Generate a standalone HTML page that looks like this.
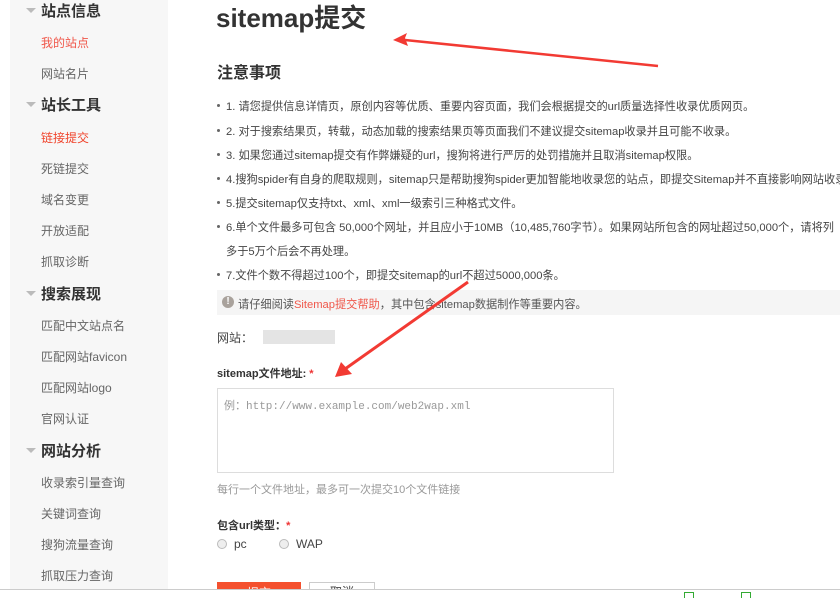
<!DOCTYPE html>
<html><head><meta charset="utf-8"><style>
*{margin:0;padding:0;box-sizing:border-box}
html,body{width:840px;height:598px;overflow:hidden}
body{background:#fff;font-family:"Liberation Sans","Noto Sans CJK SC",sans-serif;color:#333}
#w{position:relative;width:840px;height:598px;overflow:hidden}
.a{position:absolute;white-space:nowrap}
#side{position:absolute;left:10px;top:0;width:158px;height:598px;background:#f7f7f7}
.h{font-size:15px;font-weight:bold;color:#333}
.tri{position:absolute;left:26px;width:0;height:0;border-left:5px solid transparent;border-right:5px solid transparent;border-top:5px solid #bbb}
.i{font-size:12px;color:#666}
.li{font-size:11.2px;color:#444;max-width:614px;overflow:hidden}
.dot{position:absolute;left:217px;width:3px;height:3px;background:#666;border-radius:50%}
</style></head><body><div id="w">
<div id="side"></div>
<div class="tri" style="top:8px"></div><div class="a h" style="left:41px;top:0px">站点信息</div>
<div class="a i" style="left:41px;top:34px;color:#f0574a">我的站点</div>
<div class="a i" style="left:41px;top:65px">网站名片</div>
<div class="tri" style="top:102px"></div><div class="a h" style="left:41px;top:94px">站长工具</div>
<div class="a i" style="left:41px;top:129px;color:#f0442c">链接提交</div>
<div class="a i" style="left:41px;top:160px">死链提交</div>
<div class="a i" style="left:41px;top:191px">域名变更</div>
<div class="a i" style="left:41px;top:222px">开放适配</div>
<div class="a i" style="left:41px;top:253px">抓取诊断</div>
<div class="tri" style="top:291px"></div><div class="a h" style="left:41px;top:283px">搜索展现</div>
<div class="a i" style="left:41px;top:317px">匹配中文站点名</div>
<div class="a i" style="left:41px;top:348px">匹配网站favicon</div>
<div class="a i" style="left:41px;top:379px">匹配网站logo</div>
<div class="a i" style="left:41px;top:410px">官网认证</div>
<div class="tri" style="top:448px"></div><div class="a h" style="left:41px;top:440px">网站分析</div>
<div class="a i" style="left:41px;top:474px">收录索引量查询</div>
<div class="a i" style="left:41px;top:505px">关键词查询</div>
<div class="a i" style="left:41px;top:536px">搜狗流量查询</div>
<div class="a i" style="left:41px;top:567px">抓取压力查询</div>

<div class="a" style="left:216px;top:-2px;font-size:26px;font-weight:bold;color:#333">sitemap提交</div>
<div class="a" style="left:217px;top:59px;font-size:16px;font-weight:bold">注意事项</div>

<div class="dot" style="top:104px"></div><div class="a li" style="left:226px;top:98px">1. 请您提供信息详情页，原创内容等优质、重要内容页面，我们会根据提交的url质量选择性收录优质网页。</div>
<div class="dot" style="top:129px"></div><div class="a li" style="left:226px;top:123px">2. 对于搜索结果页，转载，动态加载的搜索结果页等页面我们不建议提交sitemap收录并且可能不收录。</div>
<div class="dot" style="top:153px"></div><div class="a li" style="left:226px;top:147px">3. 如果您通过sitemap提交有作弊嫌疑的url，搜狗将进行严厉的处罚措施并且取消sitemap权限。</div>
<div class="dot" style="top:177px"></div><div class="a li" style="left:226px;top:171px">4.搜狗spider有自身的爬取规则，sitemap只是帮助搜狗spider更加智能地收录您的站点，即提交Sitemap并不直接影响网站收录</div>
<div class="dot" style="top:201px"></div><div class="a li" style="left:226px;top:195px">5.提交sitemap仅支持txt、xml、xml一级索引三种格式文件。</div>
<div class="dot" style="top:225px"></div><div class="a li" style="left:226px;top:219px">6.单个文件最多可包含 50,000个网址，并且应小于10MB（10,485,760字节）。如果网站所包含的网址超过50,000个，请将列</div>
<div class="a li" style="left:226px;top:243px">多于5万个后会不再处理。</div>
<div class="dot" style="top:273px"></div><div class="a li" style="left:226px;top:267px">7.文件个数不得超过100个，即提交sitemap的url不超过5000,000条。</div>

<div class="a" style="left:217px;top:290px;width:623px;height:25px;background:#f5f5f5"></div>
<div class="a" style="left:222px;top:296px;width:12px;height:12px;border-radius:50%;background:#a9a29c;color:#fff;font-size:10px;font-weight:bold;text-align:center;line-height:12px">!</div>
<div class="a" style="left:238px;top:296px;font-size:11.2px;color:#555">请仔细阅读<span style="color:#f0574a">Sitemap提交帮助</span>，其中包含sitemap数据制作等重要内容。</div>

<div class="a" style="left:217px;top:329px;font-size:12px;color:#444">网站：</div>
<div class="a" style="left:263px;top:330px;width:72px;height:14px;background:#e4e4e4"></div>
<div class="a" style="left:217px;top:365px;font-size:11px;font-weight:bold;color:#333">sitemap文件地址: <span style="color:#e33">*</span></div>
<div class="a" style="left:217px;top:388px;width:397px;height:85px;border:1px solid #ddd"></div>
<div class="a" style="left:224px;top:397px;font-size:11px;color:#999;font-family:'Liberation Mono','Noto Sans CJK SC',monospace">例：http://www.example.com/web2wap.xml</div>
<div class="a" style="left:217px;top:481px;font-size:11px;color:#999">每行一个文件地址，最多可一次提交10个文件链接</div>
<div class="a" style="left:217px;top:517px;font-size:11px;font-weight:bold;color:#333">包含url类型：<span style="color:#e33">*</span></div>
<div class="a" style="left:217px;top:539px;width:10px;height:10px;border-radius:50%;border:1px solid #bbb;background:#eee"></div>
<div class="a" style="left:234px;top:537px;font-size:12px;color:#444">pc</div>
<div class="a" style="left:279px;top:539px;width:10px;height:10px;border-radius:50%;border:1px solid #bbb;background:#eee"></div>
<div class="a" style="left:296px;top:537px;font-size:12px;color:#444">WAP</div>
<div class="a" style="left:217px;top:582px;width:84px;height:16px;background:#f4512f;color:#fff;font-size:12px;text-align:center;padding-top:2px;overflow:hidden">提交</div>
<div class="a" style="left:309px;top:582px;width:66px;height:16px;border:1px solid #ccc;font-size:12px;text-align:center;color:#444;overflow:hidden">取消</div>

<div class="a" style="left:0;top:589px;width:840px;height:9px;background:#fff;border-top:1px solid #ccc"></div>
<div class="a" style="left:684px;top:592px;width:10px;height:6px;border:1px solid #3a3;border-bottom:none"></div>
<div class="a" style="left:741px;top:592px;width:10px;height:6px;border:1px solid #3a3;border-bottom:none"></div>

<svg class="a" style="left:0;top:0" width="840" height="598">
<line x1="658" y1="66" x2="405" y2="40" stroke="#f23a33" stroke-width="2.5"/>
<polygon points="393,40 407,33 405,38 408,46" fill="#f23a33"/>
<line x1="468" y1="282" x2="345" y2="369" stroke="#f23a33" stroke-width="3"/>
<polygon points="335,377 341,362 352,374" fill="#f23a33"/>
</svg>
</div></body></html>
